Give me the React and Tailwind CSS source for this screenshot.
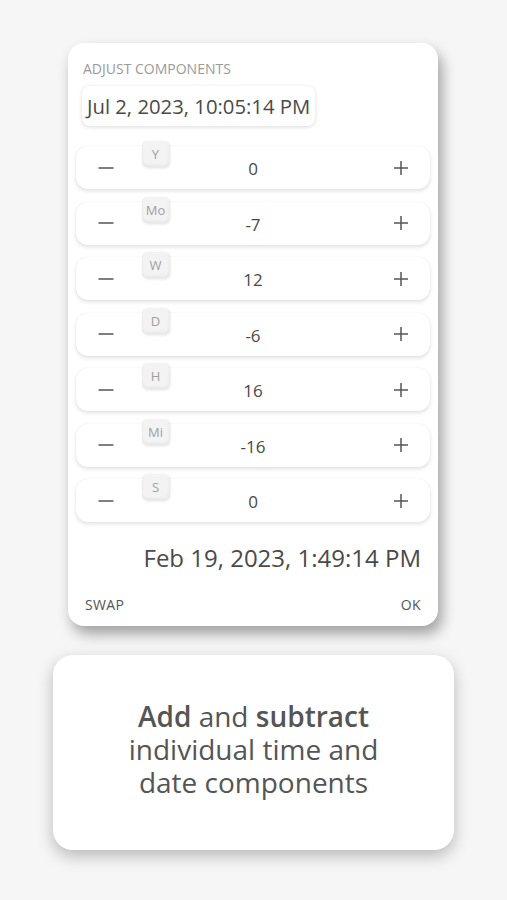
const rows = [
    { label: 'Y', value: '0' },
    { label: 'Mo', value: '-7' },
    { label: 'W', value: '12' },
    { label: 'D', value: '-6' },
    { label: 'H', value: '16' },
    { label: 'Mi', value: '-16' },
    { label: 'S', value: '0' },
];

function StepRow({ label, value }) {
    return (
        <div className="relative h-[43px] rounded-xl bg-white shadow-[0_2px_4px_rgba(0,0,0,0.12),0_0_1px_rgba(0,0,0,0.1)] flex items-center">
            <div className="absolute left-[66px] top-[-5px] w-[27px] h-[26px] rounded-[5px] bg-[#f3f3f3] shadow-[inset_0_-2px_3px_rgba(0,0,0,0.05),1px_1px_3px_rgba(0,0,0,0.12)] flex justify-center pt-[5px] text-[13px] leading-[16px] text-[#a0a0a0]">
                {label}
            </div>
            <span className="w-[58px] flex justify-center pl-[1px]">
                <svg width="16" height="16" viewBox="0 0 16 16">
                    <path d="M0.5 8h15" stroke="#555" strokeWidth="1.5" />
                </svg>
            </span>
            <span className="flex-1 text-center text-[17px] text-[#484848] pt-[3px]">{value}</span>
            <span className="w-[58px] flex justify-center pr-[1px]">
                <svg width="16" height="16" viewBox="0 0 16 16">
                    <path d="M1 8h14M8 1v14" stroke="#555" strokeWidth="1.5" />
                </svg>
            </span>
        </div>
    );
}

export default function App() {
    return (
        <div className="min-h-[900px] w-[507px] bg-[#f6f6f6] font-['Open_Sans',sans-serif] pt-[43px]">

            {/* Dialog */}
            <div className="ml-[68px] w-[370px] h-[583px] rounded-2xl bg-white shadow-[4px_8px_14px_rgba(0,0,0,0.35)] px-[8px] pt-[16px]">
                <p className="ml-[7px] text-[14px] leading-[19px] text-[#9a9a9a]">ADJUST COMPONENTS</p>
                <div className="ml-[6px] mt-[8px] inline-block rounded-lg bg-white px-[5px] h-[40px] leading-[40px] text-[20.3px] text-[#4a4a4a] shadow-[0_1px_4px_rgba(0,0,0,0.15)]">
                    Jul 2, 2023, 10:05:14 PM
                </div>

                <div className="mt-[20px] flex flex-col gap-[12.5px]">
                    {rows.map((r) => (
                        <StepRow key={r.label} label={r.label} value={r.value} />
                    ))}
                </div>

                <p className="mt-[21px] pr-[9px] text-right text-[24px] leading-[30px] text-[#4a4a4a]">
                    Feb 19, 2023, 1:49:14 PM
                </p>

                <div className="mt-[23px] flex justify-between px-[9px] text-[14px] leading-[18px] tracking-wide text-[#555]">
                    <span>SWAP</span>
                    <span>OK</span>
                </div>
            </div>

            {/* Caption card */}
            <div className="mt-[29px] ml-[53px] w-[401px] h-[195px] rounded-[20px] bg-white shadow-[0_6px_16px_rgba(0,0,0,0.25)] flex items-center justify-center pb-[6px]">
                <p className="text-center text-[28px] leading-[33px] text-[#555]">
                    <span className="font-semibold">Add</span> and <span className="font-semibold">subtract</span>
                    <br />
                    individual time and
                    <br />
                    date components
                </p>
            </div>
        </div>
    );
}
